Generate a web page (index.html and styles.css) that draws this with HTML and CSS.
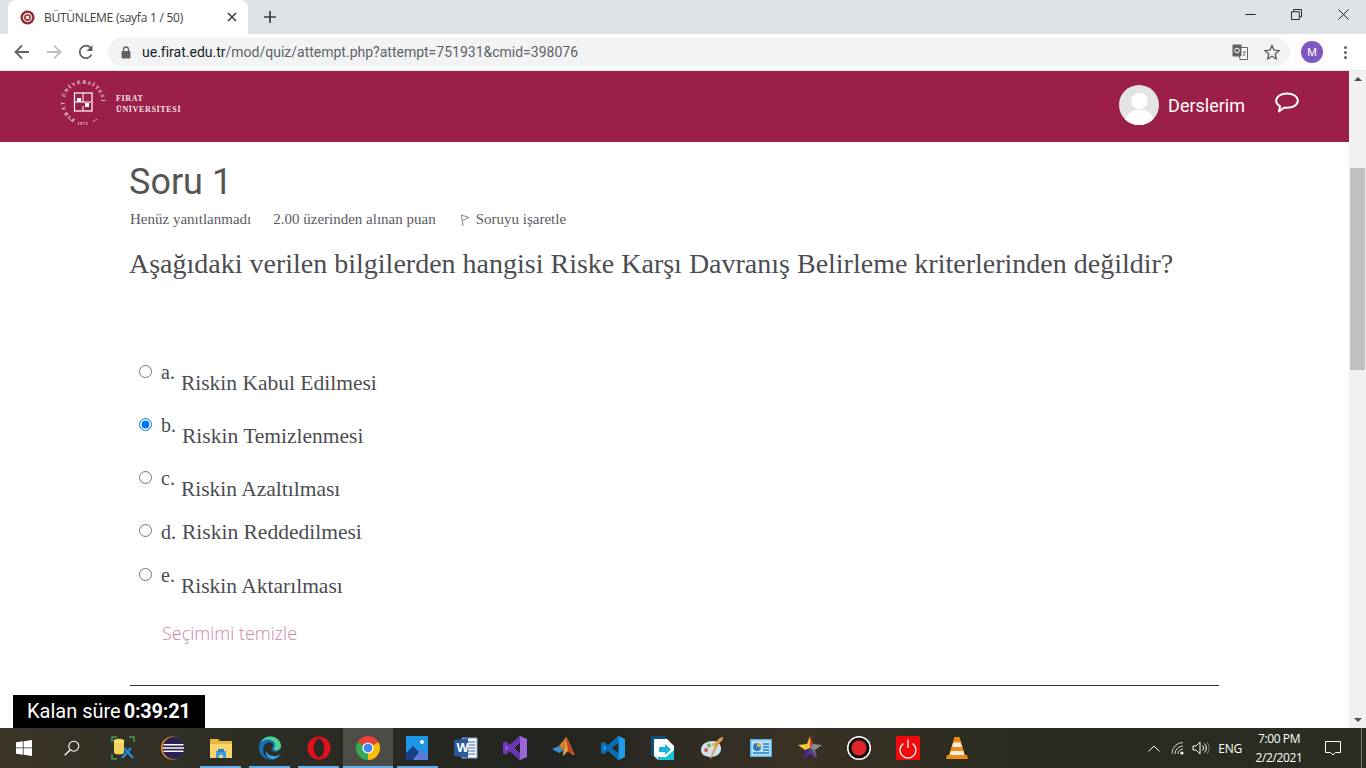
FILE: index.html
```html
<!DOCTYPE html>
<html lang="tr">
<head>
<meta charset="utf-8">
<title>BÜTÜNLEME (sayfa 1 / 50)</title>
<link rel="stylesheet" href="styles.css">
</head>
<body>
<div class="browser">
  <div class="tabstrip">
    <div class="tab">
      <svg class="favicon" viewBox="0 0 16 16"><circle cx="8" cy="8" r="7.5" fill="#8f2a33"/><circle cx="8" cy="8" r="5" fill="#f2e2dc"/><circle cx="8" cy="8" r="3.6" fill="#8f2a33"/><rect x="6.2" y="6.2" width="3.6" height="3.6" fill="#f2e2dc"/></svg>
      <span class="tab-title">BÜTÜNLEME (sayfa 1 / 50)</span>
      <svg class="tab-close" viewBox="0 0 10 10"><path d="M1 1l8 8M9 1l-8 8" stroke="#3c4043" stroke-width="1.6"/></svg>
    </div>
    <svg class="new-tab" viewBox="0 0 12 12"><path d="M6 0v12M0 6h12" stroke="#3c4043" stroke-width="1.7"/></svg>
    <div class="win-controls">
      <svg class="win-btn win-min" viewBox="0 0 12 12"><path d="M0.5 6h11" stroke="#111" stroke-width="1"/></svg>
      <svg class="win-btn win-restore" viewBox="0 0 12 12"><path d="M3 2.5V.5h8.500v8H9.500M.5 3h8.500v8.500H.5z" fill="none" stroke="#111" stroke-width="1"/></svg>
      <svg class="win-btn" viewBox="0 0 12 12"><path d="M.5.5l11 11M11.500.5l-11 11" stroke="#111" stroke-width="1"/></svg>
    </div>
  </div>
  <div class="toolbar">
    <svg class="nav-icon" viewBox="0 0 16 16"><path d="M15 8H2M8 1.500 1.500 8 8 14.500" fill="none" stroke="#5f6368" stroke-width="1.800"/></svg>
    <svg class="nav-icon" viewBox="0 0 16 16"><path d="M1 8h13M8 1.500 14.500 8 8 14.500" fill="none" stroke="#bdc1c6" stroke-width="1.800"/></svg>
    <svg class="nav-icon" viewBox="0 0 16 16"><path d="M13.600 10.500A6.200 6.200 0 1 1 12.500 3.700" fill="none" stroke="#5f6368" stroke-width="1.800"/><path d="M14.500 1v6h-6z" fill="#5f6368"/></svg>
    <div class="omnibox">
      <svg class="lock" viewBox="0 0 10 13"><path d="M2.500 5.500V3.500a2.500 2.500 0 0 1 5 0v2" fill="none" stroke="#5f6368" stroke-width="1.300"/><rect x=".5" y="5" width="9" height="7.500" rx="1" fill="#5f6368"/></svg>
      <span class="url"><span class="url-host">ue.firat.edu.tr</span>/mod/quiz/attempt.php?attempt=751931&amp;cmid=398076</span>
      <svg class="translate" viewBox="0 0 16 16"><path d="M6 3.500h9.500v12H8z" fill="#fff" stroke="#5f6368"/><rect x=".5" y=".5" width="9" height="12" rx="1" fill="#5f6368"/><circle cx="5" cy="6.500" r="2.300" fill="none" stroke="#fff"/><path d="M10.500 8h3.500M12 7v1M13.500 8c-.5 2-2 3.500-3 4M11 9.500c.5 1 1.500 2 2.500 2.500" fill="none" stroke="#5f6368" stroke-width=".8"/></svg>
      <svg class="star" viewBox="0 0 16 16"><path d="M8 1.500l2 4.600 5 .5-3.800 3.300 1.100 4.900L8 12.200l-4.300 2.600 1.100-4.900L1 6.600l5-.5z" fill="none" stroke="#5f6368" stroke-width="1.400"/></svg>
    </div>
    <span class="profile-chip">M</span>
    <span class="menu-dots"><i></i><i></i><i></i></span>
  </div>
  <div class="viewport">
    <div class="page">
      <header class="site-header">
        <svg class="logo" viewBox="0 0 125 50">
          <defs><path id="ring" d="M25 44A18.700 18.700 0 1 1 25.100 44"/></defs>
          <text class="logo-ring"><textPath href="#ring" startOffset="7%">FIRAT ÜNİVERSİTESİ</textPath></text>
          <text class="logo-year" x="25" y="48" text-anchor="middle">1975</text>
          <path d="M11 42l4 2.500M39 42l-4 2.500" stroke="#f0dde3" stroke-width=".7"/>
          <rect x="16.500" y="16" width="17.500" height="18" fill="none" stroke="#fff" stroke-width="1.200"/>
          <path d="M25 16v10M16.500 25H34M25 29v5" stroke="#fff" stroke-width="1"/>
          <rect x="19" y="21" width="4" height="4" fill="#fff"/><rect x="27" y="26" width="4" height="4" fill="#fff"/>
          <text class="logo-text" x="58" y="24">FIRAT</text>
          <text class="logo-text" x="58" y="34.500">ÜNİVERSİTESİ</text>
        </svg>
        <div class="user-area">
          <svg class="avatar" viewBox="0 0 40 40"><defs><clipPath id="av"><circle cx="20" cy="20" r="20"/></clipPath></defs><g clip-path="url(#av)"><rect width="40" height="40" fill="#e4e4e4"/><circle cx="20.500" cy="16" r="8.300" fill="#fff"/><ellipse cx="20.500" cy="36" rx="14" ry="11.500" fill="#fff"/></g></svg>
          <span class="user-link">Derslerim</span>
          <svg class="chat" viewBox="0 0 24 22"><path d="M12 1.500c6 0 10.800 3 10.800 7.300S18 15.800 12 15.800c-1 0-2-.1-2.800-.3L4 19.500l1-5.300C2.700 13 1.200 11 1.200 8.800 1.200 4.500 6 1.500 12 1.500z" fill="none" stroke="#fff" stroke-width="2" stroke-linejoin="round"/></svg>
        </div>
      </header>
      <main class="content">
        <h2 class="question-no">Soru 1</h2>
        <div class="meta">
          <span>Henüz yanıtlanmadı</span>
          <span>2.00 üzerinden alınan puan</span>
          <span class="flag-item"><svg class="flag" viewBox="0 0 10 13"><path d="M1.500 1 9 3.500 3 6.500M1.500 1l1.500 11" fill="none" stroke="#777" stroke-width=".9"/></svg>Soruyu işaretle</span>
        </div>
        <p class="question-text">Aşağıdaki verilen bilgilerden hangisi Riske Karşı Davranış Belirleme kriterlerinden değildir?</p>
        <div class="options">
          <label class="option"><input type="radio" name="q1"><span class="letter">a.</span><span class="answer">Riskin Kabul Edilmesi</span></label>
          <label class="option"><input type="radio" name="q1" checked><span class="letter">b.</span><span class="answer">Riskin Temizlenmesi</span></label>
          <label class="option"><input type="radio" name="q1"><span class="letter">c.</span><span class="answer">Riskin Azaltılması</span></label>
          <label class="option option-inline"><input type="radio" name="q1"><span class="letter">d.</span><span class="answer">Riskin Reddedilmesi</span></label>
          <label class="option"><input type="radio" name="q1"><span class="letter">e.</span><span class="answer">Riskin Aktarılması</span></label>
        </div>
        <a class="clear-choice">Seçimimi temizle</a>
        <hr class="divider">
      </main>
      <div class="timer">Kalan süre <b>0:39:21</b></div>
    </div>
    <div class="scrollbar">
      <span class="arrow-up"></span>
      <span class="thumb"></span>
      <span class="arrow-down"></span>
    </div>
  </div>
  <footer class="taskbar">
    <div class="tb-fixed"><svg class="tb-icon tb-small" viewBox="0 0 16 16"><path d="M0 2.300 6.800 1.300V7.500H0zM7.600 1.200 16 0V7.500H7.600zM0 8.300H6.800V14.700L0 13.700zM7.600 8.300H16V16L7.600 14.800z" fill="#fff"/></svg></div>
    <div class="tb-fixed"><svg class="tb-icon tb-small" viewBox="0 0 16 16"><circle cx="9.800" cy="6.200" r="5" fill="none" stroke="#fff" stroke-width="1.100"/><path d="M6.200 9.800.7 15.300" stroke="#fff" stroke-width="1.300"/></svg></div>
    <div class="tb-item"><svg class="tb-icon" viewBox="0 0 24 24"><path d="M1 6V1h5M18 1h5v5M1 18v5h5" fill="none" stroke="#3ea04a" stroke-width="1.500"/><path d="M3 4.500C3 2 13 2 13 4.500v12C13 19 3 19 3 16.500z" fill="#f4d45c"/><path d="M3 4.500C3 7 13 7 13 4.500" fill="none" stroke="#fff3b0"/><path d="M11 22 20 12M13 12l9 10" stroke="#1f8ee0" stroke-width="2.400"/></svg></div>
    <div class="tb-item"><svg class="tb-icon" viewBox="0 0 24 24"><circle cx="12.500" cy="12" r="11.500" fill="#f7941e"/><circle cx="13.500" cy="12" r="11" fill="#2c2255"/><path d="M3.500 8.700h20M2.700 12h21.500M3.500 15.300h20" stroke="#fff" stroke-width="1.400"/></svg></div>
    <div class="tb-item running"><svg class="tb-icon" viewBox="0 0 24 24"><path d="M1 3h8l2 2h12v17H1z" fill="#e8b739"/><path d="M1 8h22v14H1z" fill="#fbd56e"/><path d="M7 15h10v7h-3v-3h-4v3H7z" fill="#3f9fe0"/><rect x="9" y="13" width="6" height="3" fill="#2d7fc4"/></svg></div>
    <div class="tb-item running"><svg class="tb-icon" viewBox="0 0 24 24"><path d="M1 12C1 5.500 6 .5 12.500.5c6 0 10.500 4.500 10.500 9.500 0 3.500-3 5.500-6 5.500-2.500 0-4-1-3.500-2.500.500-1.500 2.500-2 1.500-4.500C14 6 11 5.500 8.500 7 5.500 9 4 14 6 18c1.500 3 5 5.500 9 5.500C7 24.500 1 19 1 12z" fill="#1170c4"/><path d="M23 10c0-5-4.500-9.500-10.500-9.500C8 .5 4 3 2 7c2-2 5-3.500 8-3.500 4 0 7 2.500 7 5.500 0 1-.5 2-1 2.500-.5 1.500.5 3.500 3 3 2.500-.5 4-2.500 4-4.500z" fill="#4cd28a"/><path d="M15 23.500c3-.5 6-2.500 8-6-2 2-5 3-8 2.500-3-.5-6-2-7-5-.5 4 2 8 7 8.500z" fill="#2b9fe0"/></svg></div>
    <div class="tb-item running"><svg class="tb-icon" viewBox="0 0 24 24"><circle cx="12" cy="12" r="11.500" fill="#e3121f"/><ellipse cx="12" cy="12" rx="5" ry="9" fill="#2a2b22"/><ellipse cx="12" cy="12" rx="5.500" ry="9.500" fill="none" stroke="#a90f1a"/></svg></div>
    <div class="tb-item running active"><svg class="tb-icon" viewBox="0 0 24 24"><path d="M12 12 1.600 6A12 12 0 0 1 22.400 6z" fill="#ea4335"/><path d="M12 12 1.600 6A12 12 0 0 0 12 24z" fill="#34a853"/><path d="M12 12 12 24A12 12 0 0 0 22.400 6z" fill="#fbbc05"/><circle cx="12" cy="12" r="5.600" fill="#fff"/><circle cx="12" cy="12" r="4.400" fill="#4285f4"/></svg></div>
    <div class="tb-item running"><svg class="tb-icon" viewBox="0 0 24 24"><rect x="1" y="0" width="22" height="24" fill="#1e96e8"/><path d="M1 24V17l7-7 6 6 3-2 6 5v5z" fill="#1a3f88"/><path d="M8 24l6-8 3-2 6 5v5z" fill="#5a7ee0"/><circle cx="17" cy="6" r="2" fill="#fff"/></svg></div>
    <div class="tb-item"><svg class="tb-icon" viewBox="0 0 24 24"><path d="M8 2h15v20H8z" fill="#f3f6fb" stroke="#7ea5d8"/><path d="M14 6h7M14 9h7M14 12h7M14 15h7M14 18h7" stroke="#3f6fb5"/><path d="M0 4 14 2v20L0 20z" fill="#2b579a"/><text class="word-w" x="2.500" y="16">W</text></svg></div>
    <div class="tb-item"><svg class="tb-icon" viewBox="0 0 24 24"><path d="M17 0 24 3v18l-7 3-10-9-4.500 3.500L0 17V7l2.500-1.500L7 9zM17 6.500 11 12l6 5.500z" fill="#9a65d8"/><path d="M0 7l2.500-1.500L7 9l10-9v6.500L11 12l6 5.500V24L7 15l-4.500 3.500L0 17zM2.500 9v6L5.500 12z" fill="#6c37b5"/></svg></div>
    <div class="tb-item"><svg class="tb-icon" viewBox="0 0 24 24"><path d="M0 13 7 10l5 4-5 3z" fill="#3f8ed0"/><path d="M7 10 14 1l-2 13z" fill="#d9822b"/><path d="M14 1c3 3 5 11 9 18-2 0-5-2-7-4-2 2-3 3-5 5 0-3 1-8 1-6z" fill="#e8a13a"/><path d="M14 1c3 3 5 11 9 18l-7-4z" fill="#c4421f"/></svg></div>
    <div class="tb-item"><svg class="tb-icon" viewBox="0 0 24 24"><path d="M17.500 0 24 3v18l-6.500 3L7 14.500l-4.500 3.500L0 16.500v-9L2.500 6 7 9.500zM17.500 6.500 10.500 12l7 5.500z" fill="#1f9ce8"/><path d="M0 7.500 2.500 6 7 9.500 17.500 0v6.500L10.500 12l7 5.500V24L7 14.500l-4.500 3.500L0 16.500zM2.500 9v6l3-3z" fill="#0a6cb5"/></svg></div>
    <div class="tb-item"><svg class="tb-icon" viewBox="0 0 24 24"><path d="M0 0h14l4 4v16H0z" fill="#0d4f77"/><path d="M3 3h13l7 7v14H7L3 20z" fill="#fff"/><path d="M23 14v10H7l-1-3h9z" fill="#19c2dc"/><path d="M8 11h6V8l6 5.500-6 5.500v-3H8z" fill="#19b4d8"/></svg></div>
    <div class="tb-item"><svg class="tb-icon" viewBox="0 0 24 24"><path d="M1 14C1 8 7 5 13 5s8 4 8 8-4 8-10 8c-5 0-10-2-10-7z" fill="#cde0ee"/><circle cx="6" cy="14" r="2" fill="#e0574f"/><circle cx="9" cy="9.500" r="2" fill="#6cb84c"/><circle cx="14" cy="8.500" r="1.800" fill="#f2b233"/><path d="M23 1c1 2-2 5-4 6L11 23l-1-.5 6.500-17C18 3 21 1 23 1z" fill="#d99a45"/></svg></div>
    <div class="tb-item"><svg class="tb-icon" viewBox="0 0 24 24"><rect x="1" y="3" width="22" height="18" fill="#5fb6ea"/><rect x="2.500" y="4.500" width="19" height="15" fill="#bfe2f7"/><circle cx="8" cy="11" r="4" fill="#1f7fc9"/><path d="M8 11V7a4 4 0 0 1 4 4z" fill="#f0a830"/><path d="M14 8h6M14 11h6M14 14h6M4 17h16" stroke="#1f7fc9" stroke-width="1.300"/></svg></div>
    <div class="tb-item"><svg class="tb-icon" viewBox="0 0 24 24"><path d="M12 12 12 0l3 8z" fill="#e03b3b"/><path d="M12 12 15 8l9 1-7 5z" fill="#8a8f96"/><path d="M12 12l5 2 2 9z" fill="#6b6f78"/><path d="M12 12l7 11-7-5-7 5z" fill="#5b2ea0"/><path d="M12 12 5 23l2-9z" fill="#3f2580"/><path d="M12 12 7 14 0 9l9-1 3-8z" fill="#f7c92c"/></svg></div>
    <div class="tb-item"><svg class="tb-icon" viewBox="0 0 24 24"><circle cx="12" cy="12" r="12" fill="#fff"/><circle cx="12" cy="12" r="10.500" fill="#111"/><circle cx="12" cy="12" r="7.500" fill="#e0262a"/></svg></div>
    <div class="tb-item"><svg class="tb-icon" viewBox="0 0 24 24"><rect width="24" height="24" fill="#f40a0a"/><path d="M7.500 7.500a8 8 0 1 0 9 0" fill="none" stroke="#fff" stroke-width="1.300"/><path d="M12 3.500V12" stroke="#fff" stroke-width="1.300"/></svg></div>
    <div class="tb-item"><svg class="tb-icon" viewBox="0 0 24 24"><path d="M9.500 1h5L20 19h2l1 4H1l1-4h2z" fill="#f08a12"/><path d="M8.300 6.500h7.400l1.300 4.500H7zM5.800 15h12.400l1 4H4.800z" fill="#f2efe8"/></svg></div>
    <div class="tray">
      <svg class="tray-chevron" viewBox="0 0 12 7"><path d="M.5 6.500 6 1l5.500 5.500" fill="none" stroke="#fff" stroke-width="1"/></svg>
      <svg class="tray-wifi" viewBox="0 0 14 14"><path d="M1 12.500A11 11 0 0 1 12 1.500M4 13A8 8 0 0 1 12 5M7 13a5 5 0 0 1 5-5" fill="none" stroke="#d6d6d6" stroke-width="1"/><circle cx="11" cy="12" r="1.600" fill="#fff"/></svg>
      <svg class="tray-sound" viewBox="0 0 18 14"><path d="M1 5h3l4-4v12L4 9H1z" fill="none" stroke="#fff" stroke-width="1"/><path d="M10.500 4.500a3.500 3.500 0 0 1 0 5M12.500 2.500a6.500 6.500 0 0 1 0 9" fill="none" stroke="#fff" stroke-width="1"/><path d="M15 1a10 10 0 0 1 0 12" fill="none" stroke="#777" stroke-width="1"/></svg>
      <span class="tray-lang">ENG</span>
      <span class="tray-clock"><span>7:00 PM</span><span>2/2/2021</span></span>
      <svg class="tray-notify" viewBox="0 0 16 15"><path d="M.5.500h15v11h-5L8 14l-2.500-2.500h-5z" fill="none" stroke="#fff" stroke-width="1"/></svg>
      <span class="show-desktop"></span>
    </div>
  </footer>
</div>
</body>
</html>
```
FILE: styles.css
```css
* { box-sizing: border-box; }
html, body { margin: 0; height: 100%; overflow: hidden; }
body { font-family: Roboto, "Liberation Sans", sans-serif; }
.browser { width: 1366px; height: 768px; display: flex; flex-direction: column; overflow: hidden; background: #fff; }

/* tab strip */
.tabstrip { height: 34px; flex: none; background: #dee1e6; display: flex; align-items: center; padding-left: 8px; }
.tab { width: 240px; height: 34px; background: #fff; border-radius: 8px 8px 0 0; display: flex; align-items: center; padding-left: 12px; }
.favicon { width: 15px; height: 15px; margin-right: 9px; }
.tab-title { font: 12px "Open Sans", "Noto Sans", sans-serif; color: #3c4043; flex: 1; letter-spacing: -.25px; }
.tab-close { width: 10px; height: 10px; margin-right: 11px; }
.new-tab { width: 12px; height: 12px; margin-left: 16px; }
.win-controls { margin-left: auto; display: flex; align-items: center; margin-right: 17px; margin-bottom: 6px; }
.win-btn { width: 11px; height: 11px; display: block; }
.win-min { margin-right: 35px; }
.win-restore { margin-right: 36px; }

/* toolbar */
.toolbar { height: 37px; flex: none; background: #fff; display: flex; align-items: center; padding-left: 14px; border-bottom: 1px solid #e3e4e7; }
.nav-icon { width: 16px; height: 16px; margin-right: 16px; }
.omnibox { width: 1182px; margin-left: -2px; height: 28px; border-radius: 14px; background: #f1f3f4; display: flex; align-items: center; padding-left: 13px; }
.lock { width: 10px; height: 13px; margin-right: 11px; }
.url { font: 14px Roboto, sans-serif; color: #5f6368; flex: 1; }
.url-host { color: #202124; }
.translate { width: 16px; height: 16px; margin-right: 16px; }
.star { width: 16px; height: 16px; margin-right: 10px; }
.profile-chip { width: 22px; height: 22px; margin-left: 11px; border-radius: 50%; background: #7e57c2; color: #fff; font: 11px Roboto, sans-serif; display: flex; align-items: center; justify-content: center; }
.menu-dots { display: flex; flex-direction: column; gap: 2px; margin-left: 21px; }
.menu-dots i { width: 3px; height: 3px; border-radius: 50%; background: #5f6368; display: block; }

/* page */
.viewport { flex: 1; min-height: 0; display: flex; }
.page { flex: 1; min-width: 0; position: relative; overflow: hidden; background: #fff; }
.site-header { height: 71px; background: #9b1f48; display: flex; align-items: flex-start; padding-left: 58px; padding-right: 50px; }
.logo { width: 125px; height: 50px; margin-top: 6px; }
.logo-ring { font: bold 5px "Liberation Serif", serif; fill: #f6e6eb; letter-spacing: 1.550px; }
.logo-year { font: bold 4px "Liberation Serif", serif; fill: #f0dde3; letter-spacing: .8px; }
.logo-text { font: bold 8px "Liberation Serif", serif; fill: #f3e4e9; letter-spacing: .65px; }
.user-area { margin-left: auto; display: flex; align-items: center; height: 40px; margin-top: 14px; }
.avatar { width: 40px; height: 40px; }
.user-link { font: 18px Roboto, sans-serif; color: #fff; margin-left: 9px; }
.chat { width: 24px; height: 22px; margin-left: 30px; margin-top: -4px; }

.content { padding: 0 130px; color: #4c4c52; }
.question-no { font: 400 36px/40px Roboto, sans-serif; color: #555; margin: 20px 0 0 -1px; }
.meta { display: flex; margin-top: 8px; gap: 22px; font: 15px/18px "Liberation Serif", serif; color: #5b5b62; }
.flag-item { display: flex; align-items: center; margin-left: 2px; }
.flag { width: 10px; height: 13px; margin-right: 6px; margin-top: 3px; }
.question-text { font: 28px/34px "Liberation Serif", serif; margin: 19px 0 0 -1px; white-space: nowrap; }
.options { margin: 80px 0 0 9px; }
.option { display: flex; align-items: flex-start; height: 53px; font: 20px/24px "Liberation Serif", serif; }
.option input { margin: 4px 9px 0 0; width: 13px; height: 13px; flex: none; }
.letter { margin-right: 6px; line-height: 22px; }
.answer { margin-top: 10px; font-size: 21.500px; }
.option-inline { height: 44px; }
.option-inline .letter { line-height: 24px; }
.option-inline .answer { margin-top: 0; }
.clear-choice { display: block; margin: 4px 0 0 32px; font: 300 18px/24px "Open Sans", sans-serif; color: #c88aa6; }
.divider { border: 0; border-top: 1px solid #333; margin: 40px 0 0; }
.timer { position: absolute; left: 13px; bottom: 0; width: 192px; height: 33px; background: #000; color: #fff; font: 20px/33px Roboto, sans-serif; padding-left: 14px; white-space: nowrap; }
.timer b { font-weight: 700; margin-left: -2px; letter-spacing: -.25px; }

/* scrollbar */
.scrollbar { width: 17px; flex: none; background: #f1f1f1; display: flex; flex-direction: column; align-items: center; }
.arrow-up { width: 0; height: 0; margin-top: 6px; border: 4px solid transparent; border-top: 0; border-bottom: 4px solid #505050; }
.thumb { width: 15px; height: 202px; background: #c1c1c1; margin-top: 87px; }
.arrow-down { width: 0; height: 0; margin-top: auto; margin-bottom: 6px; border: 4px solid transparent; border-bottom: 0; border-top: 4px solid #505050; }

/* taskbar */
.taskbar { height: 40px; flex: none; display: flex; align-items: center; color: #fff; background: linear-gradient(90deg, #3a3427 0, #2c2d24 20%, #22241f 40%, #3a3225 58%, #282a20 75%, #2b2d23 100%); }
.tb-fixed { width: 48px; height: 40px; display: flex; align-items: center; justify-content: center; flex: none; }
.tb-item { width: 49.100px; height: 40px; flex: none; display: flex; align-items: center; justify-content: center; position: relative; }
.tb-fixed + .tb-item { margin-left: 2px; }
.tb-item.active { background: rgba(255,255,255,.17); }
.tb-item.running::after { content: ""; position: absolute; left: 4px; right: 4px; bottom: 0; height: 2px; background: #63b0ea; }
.tb-item.active::after { left: 0; right: 0; }
.tb-icon { width: 24px; height: 24px; display: block; }
.tb-small { width: 16px; height: 16px; }
.word-w { font: bold 13px "Liberation Sans", sans-serif; fill: #fff; }
.tray { margin-left: auto; display: flex; align-items: center; height: 40px; }
.tray-chevron { width: 12px; height: 7px; }
.tray-wifi { width: 14px; height: 14px; margin-left: 11px; }
.tray-sound { width: 18px; height: 14px; margin-left: 7px; }
.tray-lang { font: 12px "Open Sans", sans-serif; margin-left: 8px; letter-spacing: -.2px; }
.tray-clock { display: flex; flex-direction: column; align-items: center; font: 12px/19px "Open Sans", sans-serif; letter-spacing: -.4px; margin-left: 13px; width: 48px; }
.tray-notify { width: 16px; height: 15px; margin-left: 22px; }
.show-desktop { width: 1px; height: 40px; background: #777; margin-left: 20px; margin-right: 4px; }
```
